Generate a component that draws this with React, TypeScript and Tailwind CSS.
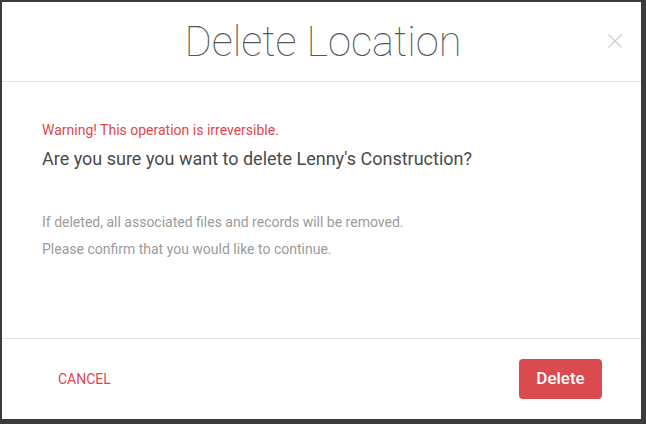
export default function App() {
  return (
    <div
      className="w-[646px] h-[424px] bg-[#3b3b3b] pt-[2px] pl-[2px] overflow-hidden"
      style={{ fontFamily: "Roboto, 'Liberation Sans', sans-serif" }}
    >
      <div className="relative w-[639px] h-[417px] bg-white flex flex-col">
        <div className="h-[79px] flex items-center justify-center border-b border-[#e2e2e2] box-content">
          <h2 className="text-[41.7px] leading-[48px] font-thin text-[#555] pl-[3px]">Delete Location</h2>
          <button type="button" className="absolute right-[19px] top-[32px] w-[14px] h-[14px] text-[#cfcfcf]">
            <svg width="14" height="14" viewBox="0 0 14 14" fill="none">
              <path d="M0.5 0.5L13.5 13.5M13.5 0.5L0.5 13.5" stroke="currentColor" strokeWidth="1.4" />
            </svg>
          </button>
        </div>

        <div className="flex-1 px-10 pt-[38px]">
          <p className="text-[14px] leading-[20px] text-[#e0474c]">Warning! This operation is irreversible.</p>
          <p className="mt-[7px] text-[18px] leading-[24px] text-[#4a4a4a]">
            Are you sure you want to delete Lenny's Construction?
          </p>
          <div className="mt-[38px] text-[14px] leading-[27px] text-[#9b9b9b]">
            <p>If deleted, all associated files and records will be removed.</p>
            <p>Please confirm that you would like to continue.</p>
          </div>
        </div>

        <div className="h-[80px] border-t border-[#e2e2e2] flex items-center justify-between pl-[56px] pr-[39px] box-content">
          <button type="button" className="text-[14px] text-[#e0474c] uppercase">Cancel</button>
          <button
            type="button"
            className="w-[83px] h-[40px] rounded-[4px] bg-[#db4a4f] text-white text-[17px] font-medium"
          >
            Delete
          </button>
        </div>
      </div>
    </div>
  );
}
